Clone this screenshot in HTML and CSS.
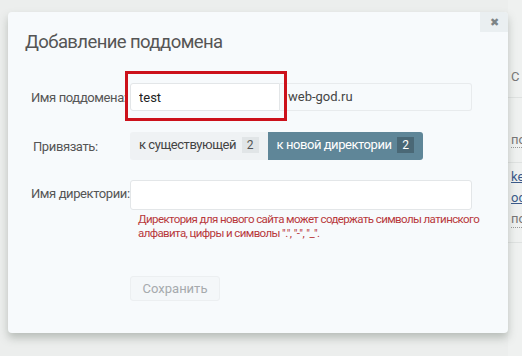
FILE: index.html
```html
<!DOCTYPE html>
<html lang="ru">
<head>
  <meta charset="UTF-8" />
  <title>Добавление поддомена</title>
  <link rel="stylesheet" href="styles.css">
</head>
<body>

  <div class="page">
    <div class="side">
      <div class="side-row first">С</div>
      <div class="side-row second"><span class="dotted">по</span></div>
      <div class="side-row links">
        <a>key</a>
        <a>od.</a>
        <span class="dotted">по</span>
      </div>
    </div>
  </div>

  <div class="modal">
    <button class="close">&#x2716;</button>
    <h1>Добавление поддомена</h1>

    <div class="row sub-row">
      <label>Имя поддомена:</label>
      <div class="group">
        <div class="mark">
          <input type="text" class="input sub" value="test" />
        </div>
        <span class="addon">web-god.ru</span>
      </div>
    </div>

    <div class="row bind">
      <label>Привязать:</label>
      <div class="switch">
        <span class="opt">к существующей <b class="badge">2</b></span>
        <span class="opt active">к новой директории <b class="badge">2</b></span>
      </div>
    </div>

    <div class="row dir">
      <label>Имя директории:</label>
      <div class="field">
        <input type="text" class="input wide" />
        <p class="error">Директория для нового сайта может содержать символы латинского алфавита, цифры и символы ".", "-", "_".</p>
      </div>
    </div>

    <div class="actions">
      <button class="save">Сохранить</button>
    </div>
  </div>

</body>
</html>
```

FILE: styles.css
```css
body {
  margin: 0;
  width: 522px;
  height: 356px;
  overflow: hidden;
  background-color: #eceeed;
  font-family: Roboto, "Open Sans", Arial, sans-serif;
  color: #555;
}
.page {
  display: flex;
  justify-content: flex-end;
  height: 356px;
}
.side {
  width: 14px;
  padding-top: 68px;
  font-size: 13px;
  line-height: 16px;
  color: #777;
  background-color: #eff1f0;
  white-space: nowrap;
}
.side-row {
  border-bottom: 1px solid #dfe2e1;
  padding-left: 3px;
  box-sizing: border-box;
}
.side-row.first {
  height: 30px;
  padding-top: 1px;
}
.side-row.second {
  height: 65px;
  padding-top: 34px;
}
.side-row.links {
  height: 80px;
  padding-top: 6px;
  display: flex;
  flex-direction: column;
  gap: 5px;
}
.side-row a {
  color: #3b5a8a;
  text-decoration: underline;
}
.dotted {
  border-bottom: 1px dotted #999;
}

.modal {
  position: absolute;
  left: 8px;
  top: 12px;
  width: 500px;
  height: 321px;
  box-sizing: border-box;
  padding: 17px 17px 0 17px;
  background-color: #f7fafc;
  border-radius: 4px;
  box-shadow: 0 5px 8px rgba(90, 100, 90, 0.35);
}
.close {
  position: absolute;
  right: 0;
  top: 0;
  width: 28px;
  height: 20px;
  border: none;
  padding: 0;
  background-color: #eaeff1;
  color: #7d8486;
  font-size: 11px;
  border-radius: 0 4px 0 0;
}
h1 {
  margin: 0;
  height: 54px;
  font-size: 18.5px;
  line-height: 26px;
  font-weight: normal;
  letter-spacing: -0.6px;
  color: #555;
}
.row {
  display: flex;
  align-items: center;
}
label {
  width: 99px;
  padding-left: 6px;
  font-size: 13px;
  letter-spacing: -0.4px;
  color: #555;
  white-space: nowrap;
  overflow: hidden;
}
.group {
  display: flex;
}
.mark {
  position: relative;
}
.mark::after {
  content: "";
  position: absolute;
  left: -5px;
  top: -12px;
  right: -7px;
  bottom: -10px;
  border: 3px solid #cc111b;
  z-index: 1;
}
.input {
  display: block;
  height: 28px;
  box-sizing: border-box;
  border: 1px solid #e3e6e8;
  border-radius: 3px;
  background-color: #fff;
  font-family: Roboto, "Open Sans", Arial, sans-serif;
  font-size: 13px;
  color: #222;
  padding: 4px 8px;
}
.input.sub {
  width: 150px;
  border-radius: 3px 0 0 3px;
}
.addon {
  width: 192px;
  height: 28px;
  box-sizing: border-box;
  padding: 5px 2px 0 8px;
  font-size: 13px;
  color: #444;
  border: 1px solid #e8ebed;
  border-left: none;
  border-radius: 0 3px 3px 0;
}
.bind {
  margin-top: 21px;
}
.bind label {
  padding-left: 8px;
  width: 97px;
}
.switch {
  display: flex;
  font-size: 13px;
  letter-spacing: -0.45px;
}
.opt {
  height: 28px;
  box-sizing: border-box;
  padding: 5px 9px 0 9px;
  background-color: #eff2f4;
  color: #444;
  border-radius: 3px 0 0 3px;
}
.opt.active {
  background-color: #5f8698;
  color: #fff;
  border-radius: 0 3px 3px 0;
}
.badge {
  display: inline-block;
  font-weight: normal;
  font-size: 12px;
  letter-spacing: 0;
  padding: 0 5px;
  margin-left: 3px;
  background-color: #e1e5e7;
  color: #555;
  line-height: 16px;
}
.opt.active .badge {
  background-color: #4a6876;
  color: #fff;
}
.dir {
  margin-top: 20px;
  align-items: flex-start;
}
.dir label {
  padding-top: 6px;
}
.field {
  width: 342px;
}
.input.wide {
  width: 342px;
  height: 30px;
}
.error {
  width: 360px;
  margin: 2px 0 0 8px;
  font-size: 11.5px;
  letter-spacing: -0.6px;
  line-height: 14px;
  color: #b8383b;
}
.actions {
  margin: 36px 0 0 105px;
}
.save {
  font-family: Roboto, "Open Sans", Arial, sans-serif;
  font-size: 13px;
  color: #a6aaad;
  background-color: #f4f7f9;
  border: 1px solid #eceff1;
  border-radius: 3px;
  padding: 3px 10px;
  width: 90px;
  height: 25px;
}
```
